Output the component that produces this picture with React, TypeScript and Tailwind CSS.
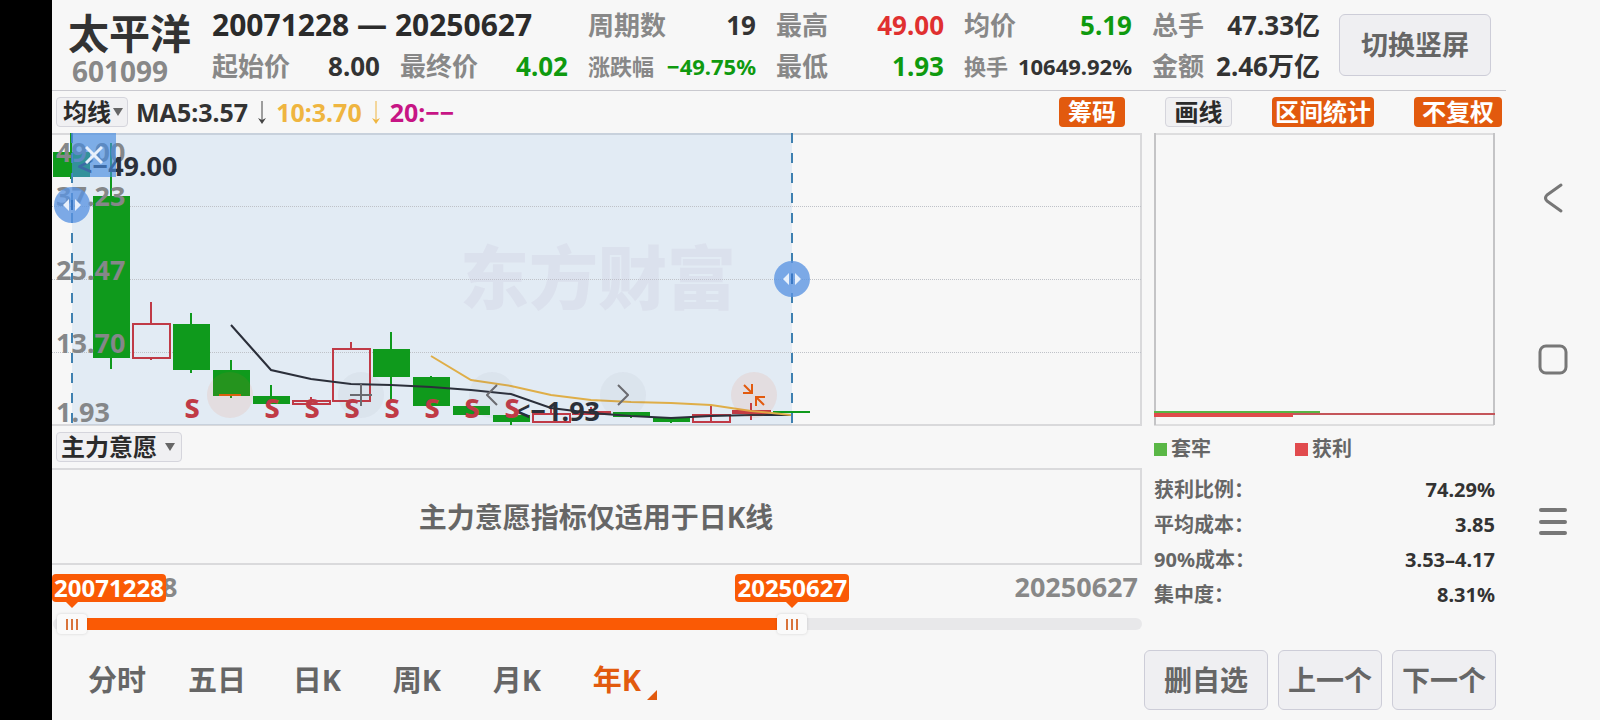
import { useState } from "react";

type Candle = {
  up: boolean;
  top: number;
  bottom: number;
  high: number;
  low: number;
  sell?: boolean;
};

const STEP = 40;

const candles: Candle[] = [
  { up: false, top: 19, bottom: 44, high: 0, low: 46 },
  { up: false, top: 63, bottom: 225, high: 10, low: 236 },
  { up: true, top: 191, bottom: 225, high: 169, low: 227 },
  { up: false, top: 191, bottom: 237, high: 180, low: 240, sell: true },
  { up: false, top: 237, bottom: 263, high: 227, low: 265 },
  { up: false, top: 263, bottom: 271, high: 252, low: 271, sell: true },
  { up: true, top: 268, bottom: 271, high: 264, low: 271, sell: true },
  { up: true, top: 216, bottom: 268, high: 209, low: 268, sell: true },
  { up: false, top: 216, bottom: 244, high: 199, low: 268, sell: true },
  { up: false, top: 244, bottom: 273, high: 243, low: 273, sell: true },
  { up: false, top: 273, bottom: 282, high: 273, low: 282, sell: true },
  { up: false, top: 282, bottom: 289, high: 282, low: 292, sell: true },
  { up: true, top: 281, bottom: 289, high: 275, low: 289 },
  { up: true, top: 279, bottom: 281, high: 274, low: 281 },
  { up: false, top: 279, bottom: 284, high: 279, low: 285 },
  { up: false, top: 284, bottom: 289, high: 284, low: 290 },
  { up: true, top: 282, bottom: 289, high: 273, low: 281 },
  { up: true, top: 278, bottom: 280, high: 270, low: 287 },
  { up: false, top: 278, bottom: 280, high: 278, low: 280 },
];

const ma5 = [192, 237, 246, 251, 252, 254, 257, 261, 275, 280, 283, 285, 283, 282, 282];
const ma10 = [223, 247, 253, 262, 267, 269, 270, 272, 278, 282];

const axis = [
  { text: "49.00", y: 29 },
  { text: "37.23", y: 73 },
  { text: "25.47", y: 147 },
  { text: "13.70", y: 220 },
  { text: "1.93", y: 289 },
];

const periods = ["分时", "五日", "日K", "周K", "月K", "年K"];

const costs = [
  { label: "获利比例：", value: "74.29%" },
  { label: "平均成本：", value: "3.85" },
  { label: "90%成本：", value: "3.53–4.17" },
  { label: "集中度：", value: "8.31%" },
];

const centerX = (i: number) => 19 + i * STEP;

const toPoints = (values: number[], start: number) =>
  values.map((y, i) => `${centerX(start + i)},${y}`).join(" ");

function Stat({ label, value, color = "text-[#333]", small = false }: { label: string; value: string; color?: string; small?: boolean }) {
  return (
    <div className={`flex items-center justify-between whitespace-nowrap ${small ? "text-[22px]" : "text-[26px]"}`}>
      <span className="text-[#888]">{label}</span>
      <span className={color}>{value}</span>
    </div>
  );
}

function Header() {
  return (
    <header className="flex items-center border-b border-[#c9c9cf] h-[91px] pl-4 pr-[15px]">
      <div className="w-36 shrink-0">
        <h1 className="text-[41px] leading-[48px] text-[#333] mt-1 whitespace-nowrap">太平洋</h1>
        <p className="text-[28px] leading-7 text-[#888] pl-1">601099</p>
      </div>
      <div className="grid grid-cols-6 gap-x-5 gap-y-[1px] flex-1 leading-10">
        <p className="col-span-2 text-[30px] text-[#2b2b2b] whitespace-nowrap">20071228 — 20250627</p>
        <Stat label="周期数" value="19" />
        <Stat label="最高" value="49.00" color="text-[#e03030]" />
        <Stat label="均价" value="5.19" color="text-[#0f9a0f]" />
        <Stat label="总手" value="47.33亿" />
        <Stat label="起始价" value="8.00" />
        <Stat label="最终价" value="4.02" color="text-[#0f9a0f]" />
        <Stat label="涨跌幅" value="−49.75%" color="text-[#0f9a0f]" small />
        <Stat label="最低" value="1.93" color="text-[#0f9a0f]" />
        <Stat label="换手" value="10649.92%" small />
        <Stat label="金额" value="2.46万亿" />
      </div>
      <button className="ml-[19px] h-[62px] w-[152px] shrink-0 rounded-md border border-[#cdcdd8] bg-[#efeff2] text-[27px] text-[#666]">
        切换竖屏
      </button>
    </header>
  );
}

function DownArrow({ className }: { className: string }) {
  return (
    <svg width="8" height="24" viewBox="0 0 8 24" className={className} aria-hidden="true">
      <path d="M4 1V20" stroke="currentColor" strokeWidth="1" />
      <path d="M0 18L4 20L8 18L4 24Z" fill="currentColor" />
    </svg>
  );
}

function Caret() {
  return (
    <svg width="10" height="8" viewBox="0 0 10 8" aria-hidden="true">
      <path d="M0 0H10L5 8Z" fill="#666" />
    </svg>
  );
}

function Toolbar() {
  const orange = "h-[30px] rounded bg-[#e25a0e] text-white";
  return (
    <div className="flex items-center justify-between h-[42px] px-1 text-2xl leading-7 whitespace-nowrap">
      <div className="flex items-center">
        <button className="flex items-center gap-[2px] h-[30px] w-[72px] pl-[6px] rounded border border-[#d5d5dc] bg-[#f0f0f2] text-[#2b2b2b]">
          均线
          <Caret />
        </button>
        <div className="ml-2 flex items-center gap-[10px] text-[25px]">
          <span className="text-[#333]">MA5:3.57</span>
          <DownArrow className="text-[#444]" />
          <span className="text-[#efb540]">10:3.70</span>
          <DownArrow className="text-[#efb540]" />
          <span className="text-[#c71585]">20:−−</span>
        </div>
      </div>
      <div className="flex items-center gap-10">
        <button className={`${orange} w-[66px]`}>筹码</button>
        <button className="h-[30px] w-[67px] rounded border border-[#d5d5dc] bg-[#f0f0f2] text-[#2b2b2b]">画线</button>
        <button className={`${orange} w-[102px]`}>区间统计</button>
        <button className={`${orange} w-[88px]`}>不复权</button>
      </div>
    </div>
  );
}

function Handle({ x, y }: { x: number; y: number }) {
  return (
    <g transform={`translate(${x} ${y})`}>
      <circle r="18" fill="#5a93e2" fillOpacity="0.78" />
      <path d="M-9 0L-3 -6V6Z M9 0L3 -6V6Z" fill="#e8f0fb" />
      <path d="M0 -5V5" stroke="#3a78c4" strokeWidth="2" />
    </g>
  );
}

function Chart() {
  return (
    <svg viewBox="0 0 1090 293" className="block w-full" role="img" aria-label="年K线">
      <path d="M0 1H1089V292H0" fill="none" stroke="#d9d9db" strokeWidth="2" />
      <rect x="20" y="0" width="720" height="292" fill="#64a0e6" fillOpacity="0.14" />
      {[73, 146, 219].map((y) => (
        <path key={y} d={`M0 ${y}.5H1089`} stroke="#bfc2c8" strokeDasharray="1 1" />
      ))}
      <text x="408" y="171" fontSize="69" fontWeight="900" fill="#c2b8d0" fillOpacity="0.2">
        东方财富
      </text>
      {candles.map((c, i) => {
        const x = centerX(i);
        const color = c.up ? "#c03a46" : "#0f9a1c";
        return (
          <g key={i}>
            <path
              d={c.up ? `M${x} ${c.high}V${c.top}M${x} ${c.bottom}V${c.low}` : `M${x} ${c.high}V${c.low}`}
              stroke={color}
              strokeWidth="2"
            />
            {c.up ? (
              <rect x={x - 18} y={c.top} width="37" height={c.bottom - c.top} fill="none" stroke={color} strokeWidth="2" />
            ) : (
              <rect x={x - 18} y={c.top} width="37" height={c.bottom - c.top} fill={color} />
            )}
          </g>
        );
      })}
      <g fontSize="27" fill="#858789">
        {axis.map((a) => (
          <text key={a.text} x="4" y={a.y}>
            {a.text}
          </text>
        ))}
      </g>
      <polyline points={toPoints(ma5, 4)} fill="none" stroke="#2b2f3a" strokeWidth="2" />
      <polyline points={toPoints(ma10, 9)} fill="none" stroke="#dfae48" strokeWidth="2" />
      <g fontSize="27" fill="#2b303a">
        <text x="25" y="43">&lt;−49.00</text>
        <text x="463" y="288">&lt;−1.93</text>
      </g>
      <g fontSize="27" fontWeight="800" fill="#c03a46" textAnchor="middle">
        {candles.map((c, i) => c.sell && (
          <text key={i} x={centerX(i) + 1} y="285">S</text>
        ))}
      </g>
      <path d="M20 0V292M740 0V292" stroke="#3f80b0" strokeWidth="2" strokeDasharray="10 10" />
      <Handle x={20} y={72} />
      <Handle x={740} y={146} />
    </svg>
  );
}

function ChartControls() {
  const round = "flex h-[46px] w-[46px] items-center justify-center rounded-full";
  return (
    <>
      <button aria-label="关闭" className="absolute left-5 top-0 flex h-11 w-11 items-center justify-center bg-[#468ce1]/65">
        <svg width="18" height="18" viewBox="0 0 18 18">
          <path d="M1 1L17 17M17 1L1 17" stroke="#e8f0fb" strokeWidth="3" />
        </svg>
      </button>
      <div className="absolute bottom-2 left-[155px] flex gap-[85px]">
        <button aria-label="缩小" className={`${round} bg-[#f06432]/10`}>
          <svg width="22" height="22" viewBox="0 0 22 22">
            <path d="M0 11H22" stroke="#d9600f" strokeWidth="2" />
          </svg>
        </button>
        <button aria-label="放大" className={`${round} bg-[#645a6e]/5`}>
          <svg width="22" height="22" viewBox="0 0 22 22">
            <path d="M0 11H22M11 0V22" stroke="#6b6b70" strokeWidth="2" />
          </svg>
        </button>
        <button aria-label="左移" className={`${round} bg-[#645a6e]/5`}>
          <svg width="12" height="22" viewBox="0 0 12 22">
            <path d="M11 1L1 11L11 21" fill="none" stroke="#6b6b70" strokeWidth="2" />
          </svg>
        </button>
        <button aria-label="右移" className={`${round} bg-[#645a6e]/5`}>
          <svg width="12" height="22" viewBox="0 0 12 22">
            <path d="M1 1L11 11L1 21" fill="none" stroke="#6b6b70" strokeWidth="2" />
          </svg>
        </button>
        <button aria-label="收起" className={`${round} bg-[#f06432]/10`}>
          <svg width="22" height="22" viewBox="0 0 22 22">
            <path d="M1 1L9 9M9 0V9H0M21 21L13 13M13 22V13H22" fill="none" stroke="#e25a0e" strokeWidth="2" />
          </svg>
        </button>
      </div>
    </>
  );
}

const rangeClass =
  "pointer-events-none absolute inset-0 h-5 w-full appearance-none bg-transparent outline-none [&::-webkit-slider-thumb]:pointer-events-auto [&::-webkit-slider-thumb]:appearance-none [&::-webkit-slider-thumb]:h-5 [&::-webkit-slider-thumb]:w-[30px] [&::-webkit-slider-thumb]:rounded-sm [&::-webkit-slider-thumb]:bg-[#fafafa] [&::-webkit-slider-thumb]:shadow-[0_0_3px_rgba(0,0,0,0.15)] [&::-webkit-slider-thumb]:bg-[image:repeating-linear-gradient(90deg,#d9743c_0_2px,transparent_2px_5px)] [&::-webkit-slider-thumb]:bg-[length:12px_11px] [&::-webkit-slider-thumb]:bg-center [&::-webkit-slider-thumb]:bg-no-repeat";

function RangeSlider() {
  const [start, setStart] = useState(4);
  const [end, setEnd] = useState(684);

  // the thumb is 30px wide, so its centre travels over the width less 30px
  const center = (v: number) => `calc(15px + (100% - 30px) * ${v / 1000})`;

  return (
    <div className="pl-[1px] pb-2">
      <div className="relative flex justify-between h-[49px] pt-[2px] pl-[1px] pr-1 text-[27px] leading-10 text-[#888]">
        <span>20071228</span>
        <span>20250627</span>
        <output className="absolute -left-[1px] top-[9px] h-7 w-[114px] rounded bg-[#fa5a05] text-center text-2xl leading-7 text-white">
          20071228
        </output>
        <output
          className="absolute top-[9px] h-7 w-[114px] -translate-x-1/2 rounded bg-[#fa5a05] text-center text-2xl leading-7 text-white"
          style={{ left: center(end) }}
        >
          20250627
        </output>
        {[start, end].map((v, i) => (
          <svg key={i} width="12" height="6" viewBox="0 0 12 6" className="absolute top-[37px] -translate-x-1/2" style={{ left: center(v) }}>
            <path d="M0 0H12L6 6Z" fill="#fa5a05" />
          </svg>
        ))}
      </div>
      <div className="relative flex h-5 items-center">
        <div className="h-3 w-full overflow-hidden rounded-full bg-[#e8e8ea]">
          <div className="h-3 bg-[#fa5a05]" style={{ marginLeft: center(start), width: `calc((100% - 30px) * ${(end - start) / 1000})` }} />
        </div>
        <input type="range" aria-label="开始日期" min={0} max={1000} value={start} onChange={(e) => setStart(Number(e.target.value))} className={rangeClass} />
        <input type="range" aria-label="结束日期" min={0} max={1000} value={end} onChange={(e) => setEnd(Number(e.target.value))} className={rangeClass} />
      </div>
    </div>
  );
}

function ChipPanel() {
  return (
    <aside className="w-[341px] shrink-0">
      <svg viewBox="0 0 341 293" className="block w-full" role="img" aria-label="筹码分布">
        <path d="M0 1H340M0 292H340" stroke="#c4c4c6" strokeWidth="1" />
        <path d="M1 0V292M340 0V292" stroke="#c4c4c6" strokeWidth="2" />
        <path d="M0 279H166" stroke="#58b545" strokeWidth="2" />
        <path d="M0 281H341" stroke="#c4555a" strokeWidth="2" />
        <path d="M0 282H139" stroke="#e04b4b" strokeWidth="4" />
      </svg>
      <div className="flex h-[46px] items-center text-xl text-[#666]">
        <span className="flex w-[141px] items-center gap-1">
          <i className="h-[13px] w-[13px] bg-[#5ab746]" />
          套牢
        </span>
        <span className="flex items-center gap-1">
          <i className="h-[13px] w-[13px] bg-[#e14b4e]" />
          获利
        </span>
      </div>
      <dl className="text-xl leading-[35px]">
        {costs.map((c) => (
          <div key={c.label} className="flex justify-between">
            <dt className="text-[#666]">{c.label}</dt>
            <dd className="text-[#333]">{c.value}</dd>
          </div>
        ))}
      </dl>
    </aside>
  );
}

function Footer() {
  const [active, setActive] = useState("年K");
  const box = "h-[60px] rounded-md border border-[#cdcdd8] bg-[#efeff2]";

  return (
    <footer className="flex items-center justify-between pt-2 pb-[10px] pl-[15px] pr-[10px]">
      <div className="flex text-[29px]">
        {periods.map((p) => (
          <button
            key={p}
            onClick={() => setActive(p)}
            className={`relative h-[60px] w-[100px] ${p === active ? "text-[#e25a0e]" : "text-[#666]"}`}
          >
            {p}
            {p === active && (
              <svg width="10" height="10" viewBox="0 0 10 10" className="absolute bottom-[10px] right-[10px]">
                <path d="M10 0V10H0Z" fill="#e25a0e" />
              </svg>
            )}
          </button>
        ))}
      </div>
      <div className="flex gap-[10px] text-[28px] text-[#666]">
        <button className={`${box} w-[124px]`}>删自选</button>
        <button className={`${box} w-[104px]`}>上一个</button>
        <button className={`${box} w-[104px]`}>下一个</button>
      </div>
    </footer>
  );
}

function SystemNav() {
  return (
    <nav className="flex w-[94px] shrink-0 flex-col items-center justify-center gap-[130px]">
      <button aria-label="返回">
        <svg width="32" height="32" viewBox="0 0 32 32" fill="none" stroke="#777" strokeWidth="3" strokeLinecap="round" strokeLinejoin="round">
          <path d="M24 3L10 13Q7 16 10 19L24 29" />
        </svg>
      </button>
      <button aria-label="主页">
        <svg width="32" height="32" viewBox="0 0 32 32" fill="none" stroke="#777" strokeWidth="3">
          <rect x="3" y="2" width="26" height="27" rx="6" />
        </svg>
      </button>
      <button aria-label="最近任务">
        <svg width="32" height="32" viewBox="0 0 32 32" stroke="#777" strokeWidth="4" strokeLinecap="round">
          <path d="M4 4H28M4 16H28M4 27H28" />
        </svg>
      </button>
    </nav>
  );
}

export default function App() {
  return (
    <div className="flex min-h-screen bg-[#f7f7f7] font-['Noto_Sans','Noto_Sans_CJK_SC',sans-serif] font-bold">
      <div className="w-[52px] shrink-0 bg-black" />
      <main className="min-w-0 flex-1">
        <Header />
        <Toolbar />
        <div className="flex gap-3 pr-[11px]">
          <section className="min-w-0 flex-1">
            <div className="relative">
              <Chart />
              <ChartControls />
            </div>
            <div className="flex h-[42px] items-center pl-1">
              <button className="flex h-[30px] w-[126px] items-center gap-2 rounded border border-[#d5d5dc] bg-[#f0f0f2] pl-1 text-2xl leading-7 text-[#2b2b2b]">
                主力意愿
                <Caret />
              </button>
            </div>
            <div className="flex h-[97px] items-center justify-center border-y-2 border-r-2 border-[#dadadc] text-[28px] text-[#666]">
              主力意愿指标仅适用于日K线
            </div>
            <RangeSlider />
          </section>
          <ChipPanel />
        </div>
        <Footer />
      </main>
      <SystemNav />
    </div>
  );
}
